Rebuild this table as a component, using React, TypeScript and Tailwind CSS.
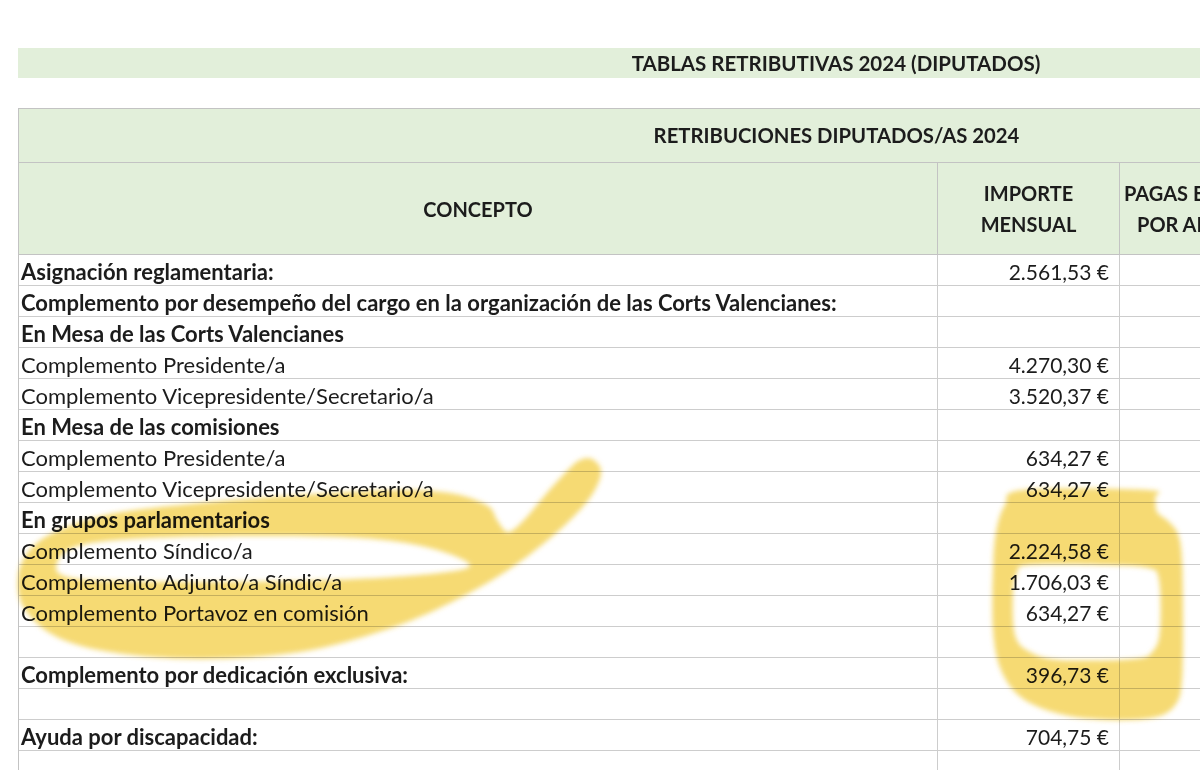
import React from 'react';

type Row = {
  label: string;
  amount?: string;
  bold?: boolean;
};

type Pt = [number, number];

const rows: Row[] = [
  { label: 'Asignación reglamentaria:', amount: '2.561,53 €', bold: true },
  { label: 'Complemento por desempeño del cargo en la organización de las Corts Valencianes:', bold: true },
  { label: 'En Mesa de las Corts Valencianes', bold: true },
  { label: 'Complemento Presidente/a', amount: '4.270,30 €' },
  { label: 'Complemento Vicepresidente/Secretario/a', amount: '3.520,37 €' },
  { label: 'En Mesa de las comisiones', bold: true },
  { label: 'Complemento Presidente/a', amount: '634,27 €' },
  { label: 'Complemento Vicepresidente/Secretario/a', amount: '634,27 €' },
  { label: 'En grupos parlamentarios', bold: true },
  { label: 'Complemento Síndico/a', amount: '2.224,58 €' },
  { label: 'Complemento Adjunto/a Síndic/a', amount: '1.706,03 €' },
  { label: 'Complemento Portavoz en comisión', amount: '634,27 €' },
  { label: '' },
  { label: 'Complemento por dedicación exclusiva:', amount: '396,73 €', bold: true },
  { label: '' },
  { label: 'Ayuda por discapacidad:', amount: '704,75 €', bold: true },
  { label: '' },
];

// closed catmull-rom curve through the points
function smooth(pts: Pt[]): string {
  const n = pts.length;
  let d = `M${pts[0][0]} ${pts[0][1]}`;
  for (let i = 0; i < n; i++) {
    const p0 = pts[(i - 1 + n) % n];
    const p1 = pts[i];
    const p2 = pts[(i + 1) % n];
    const p3 = pts[(i + 2) % n];
    const c1x = p1[0] + (p2[0] - p0[0]) / 6;
    const c1y = p1[1] + (p2[1] - p0[1]) / 6;
    const c2x = p2[0] - (p3[0] - p1[0]) / 6;
    const c2y = p2[1] - (p3[1] - p1[1]) / 6;
    d += ` C${c1x.toFixed(1)} ${c1y.toFixed(1)} ${c2x.toFixed(1)} ${c2y.toFixed(1)} ${p2[0]} ${p2[1]}`;
  }
  return d + ' Z';
}

const swooshOuter: Pt[] = [
  [592, 459], [601, 470], [596, 488], [580, 510], [548, 540], [505, 572], [450, 603],
  [385, 630], [300, 652], [200, 659], [110, 652], [55, 636], [24, 608], [18, 578],
  [28, 552], [55, 532], [110, 514], [200, 503], [300, 495], [400, 490], [455, 494],
  [488, 506], [497, 520], [508, 532], [524, 520], [546, 494], [568, 470], [580, 460],
];

const swooshHole: Pt[] = [
  [56, 568], [72, 548], [130, 539], [250, 536], [360, 538], [430, 548], [470, 566],
  [420, 575], [330, 580], [220, 582], [120, 581], [72, 578],
];

const ringOuter: Pt[] = [
  [1023, 490], [1148, 490], [1155, 498], [1157, 512], [1168, 521], [1178, 534],
  [1182, 560], [1183, 620], [1182, 680], [1176, 704], [1156, 717], [1110, 720],
  [1060, 714], [1022, 698], [1001, 670], [993, 630], [993, 570], [996, 532], [1005, 505],
];

const ringHole: Pt[] = [
  [1028, 565], [1100, 565], [1148, 568], [1159, 580], [1160, 630], [1153, 651],
  [1134, 659], [1060, 660], [1030, 652], [1015, 635], [1013, 592], [1017, 573],
];

function Highlights() {
  return (
    <svg
      className="absolute inset-0 pointer-events-none mix-blend-multiply"
      width="1200"
      height="770"
      viewBox="0 0 1200 770"
    >
      <defs>
        <filter id="soft" x="-10%" y="-10%" width="120%" height="120%">
          <feGaussianBlur stdDeviation="2.5" />
        </filter>
      </defs>
      <g fill="#f2cb38" fillOpacity="0.7" filter="url(#soft)">
        <path fillRule="evenodd" d={`${smooth(swooshOuter)} ${smooth(swooshHole)}`} />
        <path fillRule="evenodd" d={`${smooth(ringOuter)} ${smooth(ringHole)}`} />
      </g>
    </svg>
  );
}

export default function App() {
  return (
    <div className="relative w-[1200px] h-[770px] overflow-hidden bg-white text-[#1c1c1c] font-['Lato','Liberation_Sans',sans-serif]">
      <div className="pt-[48px] pl-[18px]">
        <div className="w-[1636px] h-[30px] bg-[#e2efda] flex items-center justify-center font-bold text-[20.5px]">
          TABLAS RETRIBUTIVAS 2024 (DIPUTADOS)
        </div>

        <div className="mt-[30px] w-[1636px] border-l border-t border-[#c3c3c3]">
          <div className="h-[54px] bg-[#e2efda] border-b border-[#c3c3c3] flex items-center justify-center font-bold text-[20.3px]">
            RETRIBUCIONES DIPUTADOS/AS 2024
          </div>
          <div className="grid grid-cols-[919px_182px_1fr] h-[92px] bg-[#e2efda] border-b border-[#c3c3c3] font-bold text-[20px]">
            <div className="border-r border-[#c3c3c3] flex items-center justify-center">CONCEPTO</div>
            <div className="border-r border-[#c3c3c3] flex flex-col items-center justify-center leading-[31px]">
              <span>IMPORTE</span>
              <span>MENSUAL</span>
            </div>
            <div className="flex flex-col justify-center leading-[31px] whitespace-nowrap">
              <span className="pl-[4px]">PAGAS EXTRAS</span>
              <span className="pl-[17px]">POR AÑO</span>
            </div>
          </div>

          {rows.map((row, i) => (
            <div
              key={i}
              className="grid grid-cols-[919px_182px_1fr] h-[31px] border-b border-[#cdcdcd]"
            >
              <div
                className={`border-r border-[#cdcdcd] pl-[2px] flex items-center whitespace-nowrap text-[22px] ${row.bold ? 'font-bold' : ''}`}
              >
                {row.label}
              </div>
              <div className="border-r border-[#cdcdcd] pr-[10px] flex items-center justify-end text-[21px]">
                {row.amount}
              </div>
              <div />
            </div>
          ))}
        </div>
      </div>
      <Highlights />
    </div>
  );
}
